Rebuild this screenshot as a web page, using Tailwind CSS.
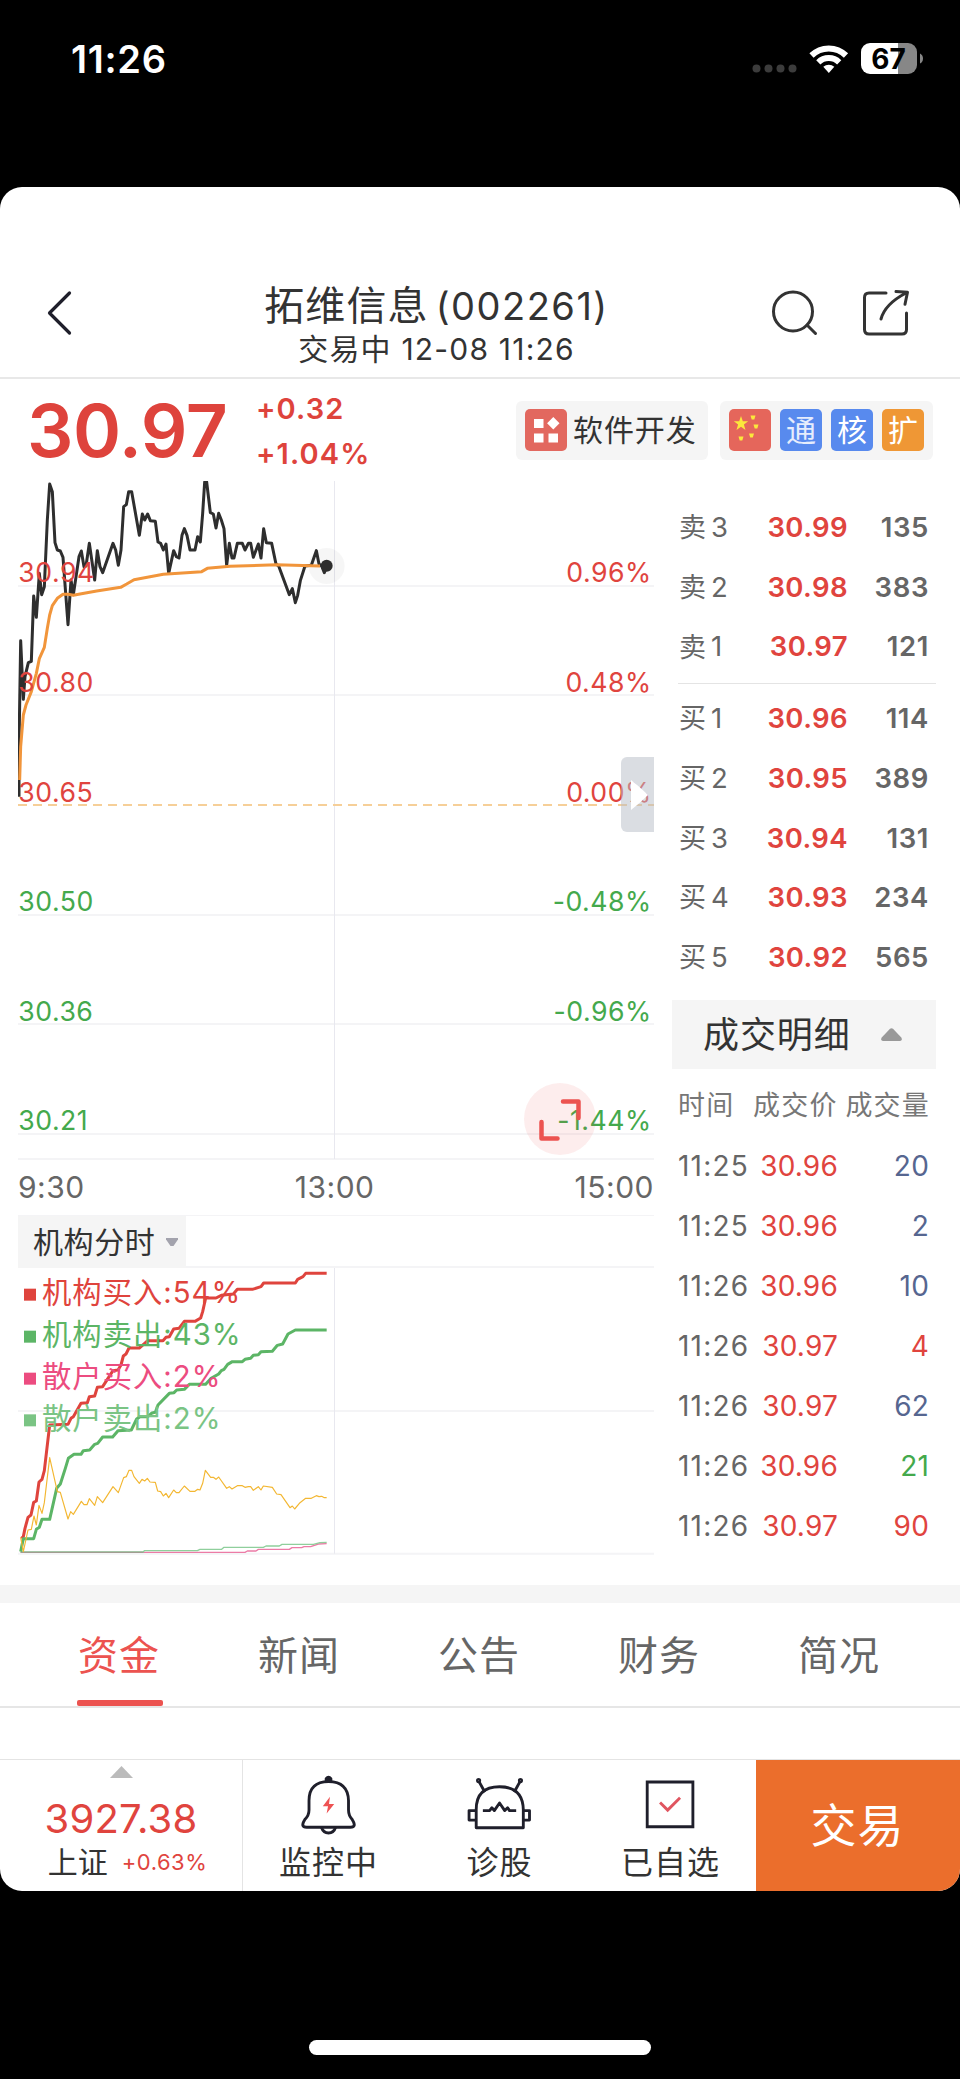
<!DOCTYPE html>
<html lang="zh-CN">
  <head>
    <meta charset="UTF-8" />
    <meta name="viewport" content="width=device-width, initial-scale=1.0" />
    <title>拓维信息(002261)</title>
    <script src="https://cdn.jsdelivr.net/npm/@tailwindcss/browser@4"></script>
  </head>
  <body class="w-[960px] h-[2079px] overflow-hidden bg-black font-['Inter','Noto_Sans_CJK_SC',sans-serif] leading-none text-[#333] whitespace-nowrap">
    <!-- Phone status bar -->
    <div class="h-[187px] flex items-start justify-between pt-[41px] pl-[71px] pr-[37px]">
      <span class="h-9 flex items-center text-white text-[38px] font-semibold tracking-[0.7px]">11:26</span>
      <svg class="w-[172px] h-9" viewBox="751 41 172 36">
        <g fill="#3c3c3c">
          <circle cx="756.5" cy="68.5" r="4" />
          <circle cx="768.5" cy="68.5" r="4" />
          <circle cx="780.5" cy="68.5" r="4" />
          <circle cx="792.5" cy="68.5" r="4" />
        </g>
        <g fill="none" stroke="#fff" stroke-width="6">
          <path d="M811.5 55.5a24.5 24.5 0 0 1 34.5 0" />
          <path d="M818.3 62.3a15 15 0 0 1 20.9 0" />
        </g>
        <path d="M828.8 73l-5.5-6.2a8.2 8.2 0 0 1 11 0z" fill="#fff" />
        <path d="M870 43h28v31h-28a9 9 0 0 1-9-9V52a9 9 0 0 1 9-9z" fill="#fff" />
        <path d="M898 43h10a9 9 0 0 1 9 9v13a9 9 0 0 1-9 9h-10z" fill="#878787" />
        <path d="M920 53.5q3 1.500 3 5t-3 5z" fill="#878787" />
        <text x="888.500" y="68.500" text-anchor="middle" font-size="28" font-weight="700" fill="#000">67</text>
      </svg>
    </div>

    <div class="h-[1704px] bg-white rounded-[22px] overflow-hidden flex flex-col">
      <!-- Title bar -->
      <header class="h-[192px] shrink-0 border-b-2 border-[#e8e8e8] flex items-start justify-between pt-[96px] pl-[46px] pr-[50px]">
        <svg class="w-[26px] h-[46px] mt-[7px]" viewBox="0 0 26 46" fill="none" stroke="#1f1f2b" stroke-width="3.200" stroke-linecap="round" stroke-linejoin="round">
          <path d="M23.500 3L3.500 23l20 20" />
        </svg>
        <div class="flex flex-col items-center ml-[31px]">
          <h1 class="h-[46px] flex items-center text-[40px] tracking-[1.1px]">拓维信息<span class="text-[38px] ml-[7px] tracking-[1.5px]">(002261)</span></h1>
          <p class="h-[40px] flex items-center text-[30px] tracking-[1.2px]">交易中 12-08 11:26</p>
        </div>
        <svg class="w-[140px] h-[50px] mt-[5px]" viewBox="770 288 140 50" fill="none" stroke="#333" stroke-width="3" stroke-linecap="round" stroke-linejoin="round">
          <circle cx="793" cy="311.500" r="19.500" />
          <path d="M807 325l8.500 8.500" />
          <path d="M886 293h-17q-4.500 0-4.500 4.500v32q0 4.500 4.500 4.500h33q4.500 0 4.500-4.500V313" />
          <path d="M881 319q4-15 25-26M896 291.500l11.500.800-2.500 12" />
        </svg>
      </header>

      <!-- Price and tags -->
      <section class="h-[102px] shrink-0 flex items-center pl-[27px] pr-[27px]">
        <div class="w-[229px] text-[73px] font-semibold text-[#de433c] tracking-[-0.4px]">30.97</div>
        <div class="flex-1 flex flex-col gap-[16px] pt-[2px] text-[29px] font-semibold text-[#de433c] tracking-[1.1px]">
          <span>+0.32</span>
          <span>+1.04%</span>
        </div>
        <div class="h-[59px] w-[192px] bg-[#f5f5f5] rounded-md flex items-center pl-[9px] gap-[6px] mr-3">
          <svg class="size-[42px]" viewBox="0 0 42 42">
            <rect width="42" height="42" rx="5" fill="#e2685f" />
            <path d="M9 10h9.500v9H9zM9 24.500h9.500v9H9zM23.500 24.500H33v9h-9.500zM28.300 8l6.200 6.200-6.200 6.200-6.200-6.200z" fill="#fff" />
          </svg>
          <span class="text-[30px] tracking-[0.9px]">软件开发</span>
        </div>
        <div class="h-[59px] w-[213px] bg-[#f5f5f5] rounded-md flex items-center justify-center gap-[9px] text-white text-[30px]">
          <svg class="size-[42px]" viewBox="0 0 42 42">
            <rect width="42" height="42" rx="5" fill="#e5665b" />
            <g fill="#fbe83c">
              <path d="M12 7l1.800 5.200 5.400.1-4.300 3.300 1.600 5.300-4.500-3.100-4.500 3.100 1.600-5.300-4.300-3.300 5.400-.1z" />
              <path d="M21.500 6.500h5l-1.200 4h-2.600zM24.500 15.500h5l-1.200 4h-2.600zM20 24.500h5l-1.200 4h-2.600zM9.500 27.500h5l-1.200 4h-2.600z" />
            </g>
          </svg>
          <span class="size-[42px] rounded-[5px] bg-[#588aee] flex items-center justify-center text-white/85">通</span>
          <span class="size-[42px] rounded-[5px] bg-[#588aee] flex items-center justify-center">核</span>
          <span class="size-[42px] rounded-[5px] bg-[#ef9735] flex items-center justify-center">扩</span>
        </div>
      </section>

      <div class="h-[1104px] shrink-0 flex pl-[18px] pr-6">
        <!-- Charts -->
        <div class="w-[636px] relative">
          <!-- Intraday price, 3 units per pixel -->
          <svg class="block w-[636px] h-[735px]" viewBox="54 63 1908 2205">
            <g stroke="#f4f4f6" stroke-width="6">
              <path d="M54 378H1962M54 705H1962M54 1365H1962M54 1692H1962M54 2022H1962M54 2097H1962M54 2268H1962" />
            </g>
            <path d="M1003.500 63V2097" stroke="#e8e8ef" stroke-width="3" />
            <path d="M54 1035H1962" stroke="#f6cf98" stroke-width="6" stroke-dasharray="27 18" />
            <circle cx="980" cy="318" r="54" fill="#000" fill-opacity=".035" />
            <g fill="none" stroke-linejoin="round" stroke-width="9">
              <path stroke="#2e2e2e" d="M57 1010L57 860 62 542 70 718 75 650 85 608 94 604 101 408 109 472 118 340 125 404 133 380 142 180 149 72 157 95 165 248 172 270 181 273 189 292 204 494 213 360 220 404 237 290 244 273 252 320 258 318 268 250 284 360 292 272 300 320 308 338 339 250 347 270 355 316 363 270 371 140 379 134 386 95 395 95 418 226 427 162 434 180 443 162 451 182 466 184 474 246 482 250 490 270 498 252 506 340 521 272 529 290 537 294 546 226 553 206 561 226 570 270 585 270 593 230 601 246 608 160 614 66 620 66 631 158 640 162 648 204 656 160 664 180 672 206 680 316 688 250 696 294 702 294 712 250 727 250 735 270 745 250 752 250 760 292 775 252 783 294 791 206 799 248 815 250 828 312 836 318 868 404 877 386 886 428 893 406 901 362 915 318 934 316 949 272 957 312 965 318 973 338 980 318" />
              <path stroke="#f1953b" d="M59 960L62 860 70 765 78 735 94 695 109 640 118 596 133 562 142 505 149 465 157 437 172 415 189 403 205 403 220 406 240 402 290 393 362 382 380 372 402 359 490 343 605 335 622 325 690 319 830 314 960 318" />
            </g>
            <circle cx="980" cy="317" r="18" fill="#2e2e2e" />
            <g font-size="80" letter-spacing="1.500" fill="#e0443e">
              <text x="55" y="366">30.94</text>
              <text x="55" y="696">30.80</text>
              <text x="55" y="1026">30.65</text>
              <text x="1955" y="366" text-anchor="end">0.96%</text>
              <text x="1955" y="696" text-anchor="end">0.48%</text>
              <text x="1955" y="1026" text-anchor="end">0.00%</text>
            </g>
            <g font-size="80" letter-spacing="1.500" fill="#44a94c">
              <text x="55" y="1353">30.50</text>
              <text x="55" y="1683">30.36</text>
              <text x="55" y="2010">30.21</text>
              <text x="1955" y="1353" text-anchor="end">-0.48%</text>
              <text x="1955" y="1683" text-anchor="end">-0.96%</text>
              <text x="1955" y="2010" text-anchor="end">-1.44%</text>
            </g>
            <g font-size="90" letter-spacing="1.500" fill="#666">
              <text x="54" y="2214">9:30</text>
              <text x="1004" y="2214" text-anchor="middle">13:00</text>
              <text x="1962" y="2214" text-anchor="end">15:00</text>
            </g>
          </svg>

          <div class="h-[52px] border-b-2 border-[#f4f4f6]">
            <div class="h-[52px] w-[168px] bg-[#f5f5f5] flex items-center pl-[15px] gap-[11px] text-[30px] tracking-[0.6px]">
              机构分时
              <svg class="w-3 h-2" viewBox="0 0 12 8"><path d="M0 0h12v1.500L7.500 8h-3L0 1.500z" fill="#a3a3ad" /></svg>
            </div>
          </div>

          <!-- Institution / retail flow, 3 units per pixel -->
          <svg class="block w-[636px] h-[287px]" viewBox="54 204 1908 861">
            <path d="M54 633H1962M54 1061H1962" stroke="#f4f4f6" stroke-width="6" />
            <path d="M1003.500 204V1061" stroke="#e8e8ef" stroke-width="3" />
            <g fill="none" stroke-linejoin="round">
              <path stroke="#ec7ba6" stroke-width="4" d="M62 1057L735 1057 742 1053 768 1053 775 1048 868 1048 876 1043 905 1043 912 1040 932 1040 955 1032 980 1031" />
              <path stroke="#8fcf9c" stroke-width="4" d="M62 1056L430 1056 433 1052 592 1052 600 1048 665 1048 672 1042 790 1042 798 1038 838 1038 846 1033 940 1033 960 1028 980 1027" />
              <path stroke="#a09c90" stroke-width="4" d="M62 1057H430" />
              <path stroke="#df443d" stroke-width="9" d="M64 1015L70 1010 75 985 84 952 93 945 101 907 109 903 117 846 126 838 133 812 149 675 204 673 213 655 220 650 243 610 262 608 268 590 284 588 292 562 308 560 339 512 354 510 363 495 370 468 378 462 387 444 418 444 434 430 443 422 489 422 498 412 508 410 521 387 537 385 553 364 585 364 602 354 608 335 617 294 648 294 664 286 700 282 712 268 757 268 783 260 791 249 886 249 893 238 909 230 917 220 980 220" />
              <path stroke="#5cb566" stroke-width="9" d="M62 1055L70 1016 101 1016 109 988 118 982 126 958 149 958 170 865 181 852 196 805 205 775 222 763 243 763 250 752 269 750 284 733 293 730 308 711 338 711 354 692 394 690 410 657 420 650 443 650 456 639 466 637 474 615 508 580 522 578 530 570 553 568 568 553 617 553 632 536 656 522 664 512 672 508 683 493 697 485 727 485 735 478 752 475 760 466 775 464 783 455 817 454 832 436 848 432 864 402 886 390 980 390" />
              <path stroke="#f3b732" stroke-width="3.500" d="M62 1012L70 1055 84 990 94 988 102 948 109 975 117 916 126 940 133 908 149 773 157 808 172 875 181 877 204 957 212 935 220 943 244 904 252 914 261 914 268 896 284 916 292 890 308 908 339 860 355 878 371 833 379 830 387 811 395 811 402 830 418 850 426 838 434 843 442 835 450 846 466 847 473 873 482 875 490 888 498 880 506 893 521 870 529 878 537 878 553 858 570 874 585 874 593 868 600 870 608 850 616 811 632 832 640 832 648 838 656 831 680 865 688 860 696 867 712 857 727 857 735 862 745 860 752 860 760 871 775 860 783 870 790 858 817 862 830 882 843 884 870 923 877 918 884 927 900 908 917 895 934 895 949 887 957 890 965 889 973 893 980 893" />
            </g>
            <g font-size="88" letter-spacing="3">
              <g fill="#df443d"><path d="M72 266h36v36H72z" /><text x="126" y="308">机构买入:54%</text></g>
              <g fill="#5cb566"><path d="M72 392h36v36H72z" /><text x="126" y="434">机构卖出:43%</text></g>
              <g fill="#ec4c80"><path d="M72 518h36v36H72z" /><text x="126" y="560">散户买入:2%</text></g>
              <g fill="#7ac484"><path d="M72 643h36v36H72z" /><text x="126" y="686">散户卖出:2%</text></g>
            </g>
          </svg>

          <!-- Side panel handle and full screen button over the chart -->
          <div class="absolute right-0 top-[276px] w-[33px] h-[75px] rounded-l-md bg-[#b5bbc5]/50">
            <svg class="w-[33px] h-[75px]" viewBox="0 0 33 75"><path d="M10 23q9 7 17 15-8 8-17 15z" fill="#fff" /></svg>
          </div>
          <div class="absolute left-[506px] top-[602px] size-[72px] rounded-full bg-[#ef5350]/10">
            <svg class="size-[72px]" viewBox="0 0 72 72" fill="none" stroke="#ec5350" stroke-width="4.500" stroke-linecap="round" stroke-linejoin="round">
              <path d="M39 18.500h15.500V35M17.500 39v16.500H33.500" />
            </svg>
          </div>
        </div>

        <!-- Order book and trades -->
        <aside class="w-[264px] ml-[18px] pt-[17px] text-[#666]">
          <div class="ml-[6px] border-b border-[#e4e4e4] pb-[6px] pr-[7px] pl-px text-[27.5px]">
            <div class="h-[59.7px] grid grid-cols-[32px_137px_1fr] items-center"><span class="text-[27px]">卖</span><span class="flex justify-between"><i class="not-italic">3</i><b class="font-semibold tracking-[0.4px] text-[#e0443e]">30.99</b></span><b class="font-semibold tracking-[0.6px] text-right">135</b></div>
            <div class="h-[59.7px] grid grid-cols-[32px_137px_1fr] items-center"><span class="text-[27px]">卖</span><span class="flex justify-between"><i class="not-italic">2</i><b class="font-semibold tracking-[0.4px] text-[#e0443e]">30.98</b></span><b class="font-semibold tracking-[0.6px] text-right">383</b></div>
            <div class="h-[59.7px] grid grid-cols-[32px_137px_1fr] items-center"><span class="text-[27px]">卖</span><span class="flex justify-between"><i class="not-italic">1</i><b class="font-semibold tracking-[0.4px] text-[#e0443e]">30.97</b></span><b class="font-semibold tracking-[0.6px] text-right">121</b></div>
          </div>
          <div class="ml-[6px] pt-[5px] pr-[7px] pl-px text-[27.5px]">
            <div class="h-[59.7px] grid grid-cols-[32px_137px_1fr] items-center"><span class="text-[27px]">买</span><span class="flex justify-between"><i class="not-italic">1</i><b class="font-semibold tracking-[0.4px] text-[#e0443e]">30.96</b></span><b class="font-semibold tracking-[0.6px] text-right">114</b></div>
            <div class="h-[59.7px] grid grid-cols-[32px_137px_1fr] items-center"><span class="text-[27px]">买</span><span class="flex justify-between"><i class="not-italic">2</i><b class="font-semibold tracking-[0.4px] text-[#e0443e]">30.95</b></span><b class="font-semibold tracking-[0.6px] text-right">389</b></div>
            <div class="h-[59.7px] grid grid-cols-[32px_137px_1fr] items-center"><span class="text-[27px]">买</span><span class="flex justify-between"><i class="not-italic">3</i><b class="font-semibold tracking-[0.4px] text-[#e0443e]">30.94</b></span><b class="font-semibold tracking-[0.6px] text-right">131</b></div>
            <div class="h-[59.7px] grid grid-cols-[32px_137px_1fr] items-center"><span class="text-[27px]">买</span><span class="flex justify-between"><i class="not-italic">4</i><b class="font-semibold tracking-[0.4px] text-[#e0443e]">30.93</b></span><b class="font-semibold tracking-[0.6px] text-right">234</b></div>
            <div class="h-[59.7px] grid grid-cols-[32px_137px_1fr] items-center"><span class="text-[27px]">买</span><span class="flex justify-between"><i class="not-italic">5</i><b class="font-semibold tracking-[0.4px] text-[#e0443e]">30.92</b></span><b class="font-semibold tracking-[0.6px] text-right">565</b></div>
          </div>

          <div class="h-[69px] mt-[12px] bg-[#f5f5f5] flex items-center justify-between pl-[31px] pr-[34px] text-[36px] tracking-[0.9px] text-[#333]">
            <span class="pt-[2px]">成交明细</span>
            <svg class="w-[21px] h-[13px]" viewBox="0 0 21 13"><path d="M9 .800q1.500-1.300 3 0l8.500 9q1 2.700-1.500 3.200H2q-2.500-.500-1.500-3.200z" fill="#999" /></svg>
          </div>

          <div class="h-[67px] pt-[7px] pl-[6px] pr-[6px] grid grid-cols-[75px_84px_1fr] items-center text-[27px] tracking-[1.2px] text-[#777]">
            <span>时间</span><span>成交价</span><span class="text-right">成交量</span>
          </div>
          <div class="pl-[6px] pr-[7px] text-[28px] tracking-[0.2px]">
            <div class="h-[60px] grid grid-cols-[75px_85px_1fr] items-center"><span class="tracking-[1.2px]">11:25</span><span class="text-right text-[#e0443e]">30.96</span><span class="text-right text-[#566690]">20</span></div>
            <div class="h-[60px] grid grid-cols-[75px_85px_1fr] items-center"><span class="tracking-[1.2px]">11:25</span><span class="text-right text-[#e0443e]">30.96</span><span class="text-right text-[#566690]">2</span></div>
            <div class="h-[60px] grid grid-cols-[75px_85px_1fr] items-center"><span class="tracking-[1.2px]">11:26</span><span class="text-right text-[#e0443e]">30.96</span><span class="text-right text-[#566690]">10</span></div>
            <div class="h-[60px] grid grid-cols-[75px_85px_1fr] items-center"><span class="tracking-[1.2px]">11:26</span><span class="text-right text-[#e0443e]">30.97</span><span class="text-right text-[#e0443e]">4</span></div>
            <div class="h-[60px] grid grid-cols-[75px_85px_1fr] items-center"><span class="tracking-[1.2px]">11:26</span><span class="text-right text-[#e0443e]">30.97</span><span class="text-right text-[#566690]">62</span></div>
            <div class="h-[60px] grid grid-cols-[75px_85px_1fr] items-center"><span class="tracking-[1.2px]">11:26</span><span class="text-right text-[#e0443e]">30.96</span><span class="text-right text-[#44a94c]">21</span></div>
            <div class="h-[60px] grid grid-cols-[75px_85px_1fr] items-center"><span class="tracking-[1.2px]">11:26</span><span class="text-right text-[#e0443e]">30.97</span><span class="text-right text-[#e0443e]">90</span></div>
          </div>
        </aside>
      </div>

      <!-- Tabs -->
      <nav class="h-[123px] shrink-0 border-t-[18px] border-t-[#f5f5f5] border-b-2 border-b-[#e6e6e6] pl-[29px] pr-[31px] grid grid-cols-5 text-center text-[40px] tracking-[0.9px] text-[#666]">
        <div class="h-[103px] flex flex-col items-center text-[#ec5350]"><span class="h-[97px] pt-[9px] flex items-center">资金</span><i class="w-[86px] h-[6px] ml-[2px] shrink-0 rounded-[2px] bg-[#ec5350]"></i></div>
        <span class="h-[97px] pt-[9px] flex items-center justify-center">新闻</span>
        <span class="h-[97px] pt-[9px] flex items-center justify-center">公告</span>
        <span class="h-[97px] pt-[9px] flex items-center justify-center">财务</span>
        <span class="h-[97px] pt-[9px] flex items-center justify-center">简况</span>
      </nav>

      <!-- Bottom action bar -->
      <footer class="h-[132px] mt-auto shrink-0 border-t border-[#e4e4e4] flex">
        <div class="w-[243px] border-r border-[#e4e4e4] flex flex-col items-center pt-[6px]">
          <svg class="w-[23px] h-[12px]" viewBox="0 0 23 12"><path d="M11.500 0L23 12H0z" fill="#bbb" /></svg>
          <span class="h-[42px] mt-[20px] flex items-center text-[40px] tracking-[0.2px] text-[#e0443e]">3927.38</span>
          <div class="flex items-center gap-[14px] h-[44px] ml-[13px] text-[30px]">上证<span class="text-[22px] tracking-[0.5px] text-[#e0443e]">+0.63%</span></div>
        </div>
        <div class="w-[171px] flex flex-col items-center pt-[13px] text-[32px]">
          <svg class="w-[60px] h-[66px]" viewBox="299 1773 60 66" fill="none" stroke="#1f1f2b" stroke-width="3" stroke-linejoin="round">
            <path d="M308 1802q0-20 20.500-20t21 20v10q0 6 4 10 5 8-2 8h-46q-7 0-2-8 4.500-4 4.500-10z" />
            <path d="M321 1830q2 6 7.500 6t7.500-6" />
            <path d="M326 1782v-3q2.500-3 5 0v3z" fill="#1f1f2b" />
            <path d="M330 1798l-7.500 10h5.500l-1.500 7.500 8-10H329z" fill="#ee5253" stroke="none" />
          </svg>
          <span class="h-[58px] flex items-center tracking-[1px]">监控中</span>
        </div>
        <div class="w-[171px] flex flex-col items-center pt-[13px] text-[32px]">
          <svg class="w-[70px] h-[66px]" viewBox="465 1773 70 66" fill="none" stroke="#1f1f2b" stroke-width="3" stroke-linejoin="round">
            <path d="M475 1830.500v-19q0-24 24.500-24t25 24v19z" />
            <path d="M475 1812.500h-7.500v10h7.500M524.500 1812.500h6.500v10h-6.500" />
            <path d="M478 1782l6 11M521 1782l-6 11" />
            <circle cx="477.500" cy="1781" r="1.200" /><circle cx="521.500" cy="1781" r="1.200" />
            <path d="M482 1812.500h7l2.500-3 2.500 3 5.500-8 5.500 8 3-3 2 3h7" />
          </svg>
          <span class="h-[58px] flex items-center tracking-[1px]">诊股</span>
        </div>
        <div class="w-[171px] flex flex-col items-center pt-[13px] text-[32px]">
          <svg class="w-[60px] h-[66px]" viewBox="641.500 1773 60 66" fill="none" stroke="#1f1f2b" stroke-width="3">
            <path d="M646.500 1782.500h48v47h-48z" />
            <path d="M660 1804l8 8 13-13" stroke="#e05560" />
          </svg>
          <span class="h-[58px] flex items-center tracking-[1px]">已自选</span>
        </div>
        <button type="button" class="flex-1 pb-[2px] pr-[1px] bg-[#eb6e2c] text-white text-[46px] tracking-[1px]">交易</button>
      </footer>
    </div>

    <!-- Home indicator -->
    <div class="w-[342px] h-[15px] mt-[149px] mx-auto rounded-full bg-white"></div>
  </body>
</html>
